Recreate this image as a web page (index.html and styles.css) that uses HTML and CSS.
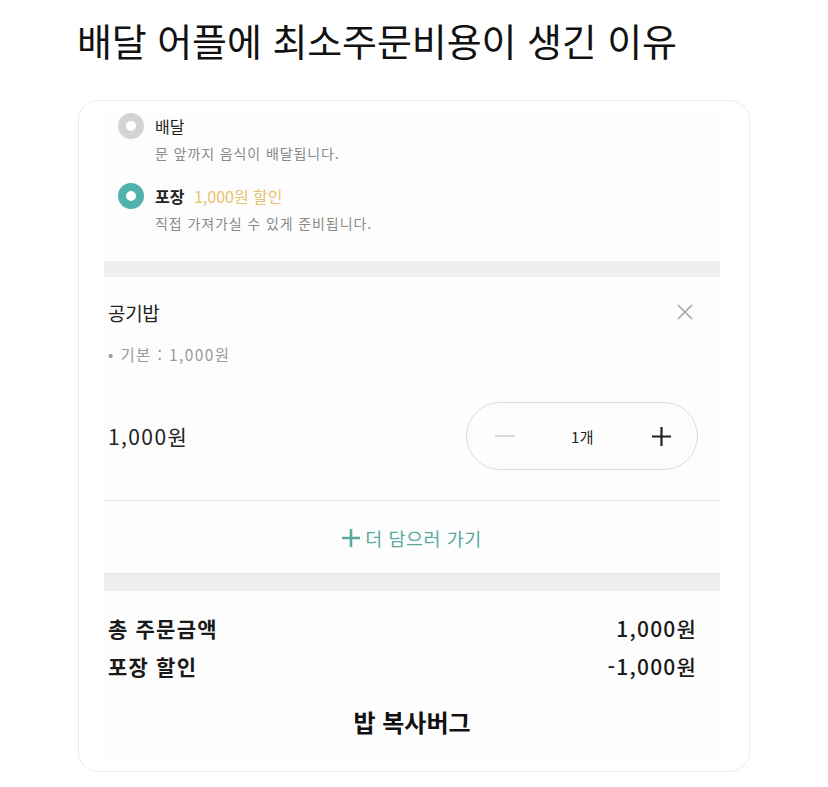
FILE: index.html
```html
<!DOCTYPE html>
<html lang="ko">
<head>
    <meta charset="UTF-8">
    <meta name="viewport" content="width=device-width, initial-scale=1.0">
    <title>배달 어플에 최소주문비용이 생긴 이유</title>
    <link rel="stylesheet" href="styles.css">
</head>
<body>
    <h1 class="title">배달 어플에 최소주문비용이 생긴 이유</h1>

    <div class="card">
        <div class="shot">
            <!-- 배달 / 포장 선택 -->
            <div class="options">
                <div class="option">
                    <span class="radio"></span>
                    <div class="option-name">배달</div>
                    <div class="option-desc">문 앞까지 음식이 배달됩니다.</div>
                </div>
                <div class="option option-pickup">
                    <span class="radio radio-on"></span>
                    <div class="option-name"><b>포장</b> <span class="discount">1,000원 할인</span></div>
                    <div class="option-desc">직접 가져가실 수 있게 준비됩니다.</div>
                </div>
            </div>

            <div class="band"></div>

            <!-- 메뉴 -->
            <div class="item">
                <div class="item-head">
                    <span class="item-name">공기밥</span>
                    <svg class="close" width="18" height="18" viewBox="0 0 18 18">
                        <path d="M2 2 L16 16 M16 2 L2 16" stroke="#a8a8a8" stroke-width="1.6" fill="none"/>
                    </svg>
                </div>
                <div class="item-option">• 기본 : 1,000원</div>
                <div class="item-row">
                    <span class="item-price">1,000원</span>
                    <div class="stepper">
                        <span class="step-minus"></span>
                        <span class="step-count">1개</span>
                        <svg class="step-plus" width="21" height="21" viewBox="0 0 21 21">
                            <path d="M10.5 1 V20 M1 10.5 H20" stroke="#222" stroke-width="2.2" fill="none"/>
                        </svg>
                    </div>
                </div>
            </div>

            <div class="add-more">
                <svg width="18" height="18" viewBox="0 0 18 18">
                    <path d="M9 0 V18 M0 9 H18" stroke="#5aa99f" stroke-width="2.6" fill="none"/>
                </svg>
                더 담으러 가기
            </div>

            <div class="band band-bottom"></div>

            <!-- 합계 -->
            <div class="totals">
                <div class="total-row">
                    <span>총 주문금액</span>
                    <span class="amount">1,000원</span>
                </div>
                <div class="total-row">
                    <span>포장 할인</span>
                    <span class="amount">-1,000원</span>
                </div>
            </div>

            <div class="caption">밥 복사버그</div>
        </div>
    </div>
</body>
</html>
```

FILE: styles.css
```css
body {
    margin: 0;
    background-color: #fff;
    color: #111;
    font-family: "Noto Sans CJK KR", "Noto Sans", sans-serif;
}
.title {
    margin: 17px 0 0 77px;
    font-size: 38px;
    font-weight: 400;
    line-height: 46px;
    letter-spacing: -0.1px;
    color: #111;
}
.card {
    box-sizing: border-box;
    width: 672px;
    height: 672px;
    margin: 37px 0 0 78px;
    border: 1px solid #ececec;
    border-radius: 20px;
    padding: 12px 29px 0 25px;
}
.shot {
    background-color: #fdfdfd;
}
.options {
    padding: 0 0 29px 14px;
}
.option {
    display: grid;
    grid-template-columns: 26px 1fr;
    column-gap: 11px;
}
.option-pickup {
    margin-top: 21px;
}
.radio {
    box-sizing: border-box;
    width: 26px;
    height: 26px;
    border-radius: 50%;
    border: 8px solid #d3d3d3;
    background-color: #fff;
}
.radio-on {
    border-color: #4fb2ab;
}
.option-name {
    font-size: 16px;
    line-height: 26px;
    color: #222;
}
.option-name b {
    font-weight: 700;
}
.discount {
    color: #e8c36c;
    margin-left: 5px;
}
.option-desc {
    grid-column: 2;
    margin-top: 5px;
    font-size: 14px;
    line-height: 18px;
    color: #8a8a8a;
    letter-spacing: 0.9px;
}
.band {
    height: 16px;
    background-color: #efefef;
}
.band-bottom {
    height: 17px;
    border-top: 1px solid #e6e6e6;
}
.item {
    padding: 22px 22px 30px 4px;
    border-bottom: 1px solid #e8e8e8;
}
.item-head {
    display: flex;
    justify-content: space-between;
    align-items: center;
    height: 26px;
}
.item-name {
    font-size: 19px;
    color: #222;
    letter-spacing: -0.3px;
}
.close {
    margin-right: 4px;
}
.item-option {
    margin-top: 19px;
    font-size: 15.5px;
    line-height: 20px;
    color: #9a9a9a;
    letter-spacing: 1.4px;
}
.item-row {
    display: flex;
    justify-content: space-between;
    align-items: center;
    margin-top: 38px;
}
.item-price {
    font-size: 21px;
    color: #222;
    letter-spacing: 1.4px;
}
.stepper {
    box-sizing: border-box;
    display: flex;
    align-items: center;
    width: 232px;
    height: 68px;
    padding: 0 25px 0 28px;
    border: 1.5px solid #dcdcdc;
    border-radius: 34px;
}
.step-minus {
    width: 20px;
    height: 2px;
    background-color: #d8d8d8;
}
.step-count {
    margin-left: 56px;
    font-size: 15px;
    color: #222;
    letter-spacing: 0.5px;
}
.step-plus {
    margin-left: auto;
}
.add-more {
    display: flex;
    align-items: center;
    justify-content: center;
    gap: 5px;
    padding: 25px 0 23px;
    font-size: 18.5px;
    line-height: 24px;
    color: #5aa99f;
    letter-spacing: 0.5px;
}
.totals {
    padding: 25px 23px 0 4px;
}
.total-row {
    display: flex;
    justify-content: space-between;
    font-size: 21px;
    line-height: 24px;
    font-weight: 700;
    color: #1a1a1a;
    letter-spacing: 1.2px;
}
.total-row + .total-row {
    margin-top: 14px;
}
.amount {
    font-weight: 500;
    letter-spacing: 1.2px;
}
.caption {
    margin-top: 30px;
    padding-bottom: 24px;
    text-align: center;
    font-size: 24px;
    line-height: 28px;
    font-weight: 700;
    color: #111;
}
```
